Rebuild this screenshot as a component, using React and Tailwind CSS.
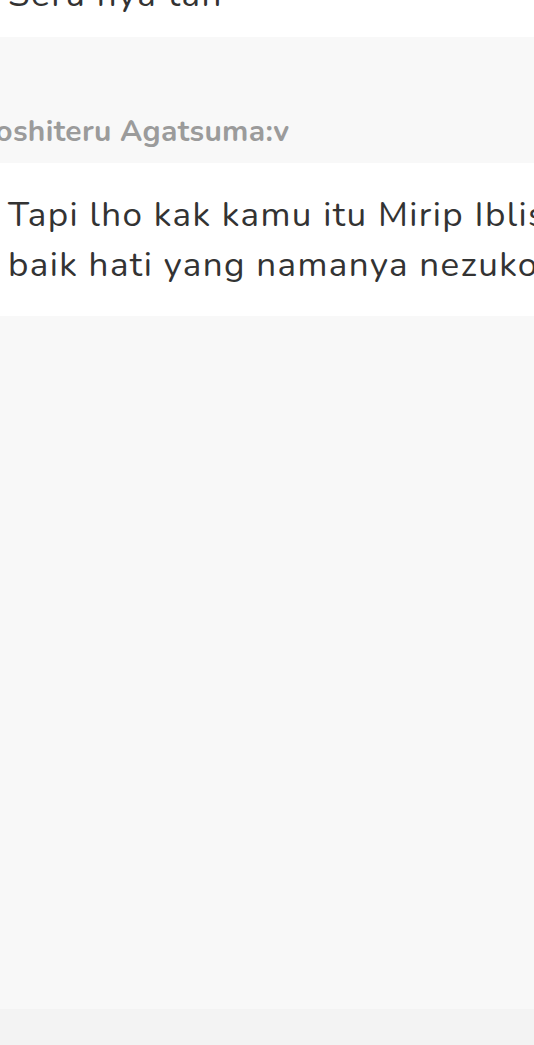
export default function App() {
  return (
    <div className="w-[534px] h-[1045px] overflow-hidden bg-[#f8f8f8] flex flex-col" style={{ fontFamily: 'Nunito, Lato, "Noto Sans", sans-serif' }}>
      <div className="h-[37px] bg-white overflow-hidden shrink-0">
        <p className="-mt-[30px] pl-2 text-[35px] leading-[50px] tracking-[1.5px] text-[#333] whitespace-nowrap">Seru nya tan</p>
      </div>

      <div className="h-[126px] shrink-0 flex items-end pb-[13px]">
        <p className="-ml-[21px] text-[30px] leading-[36px] tracking-[0.3px] font-bold text-[#9b9b9b] whitespace-nowrap">Yoshiteru Agatsuma:v</p>
      </div>

      <div className="bg-white shrink-0 pl-2 pt-[27px] pb-[26px]">
        <p className="text-[35px] leading-[50px] tracking-[1.4px] text-[#333] whitespace-nowrap">
          Tapi lho kak kamu itu Mirip Iblis
          <br />
          baik hati yang namanya nezuko
        </p>
      </div>

      <div className="flex-1 bg-[#f8f8f8]" />
      <div className="h-[36px] shrink-0 bg-[#f3f3f3]" />
    </div>
  )
}
